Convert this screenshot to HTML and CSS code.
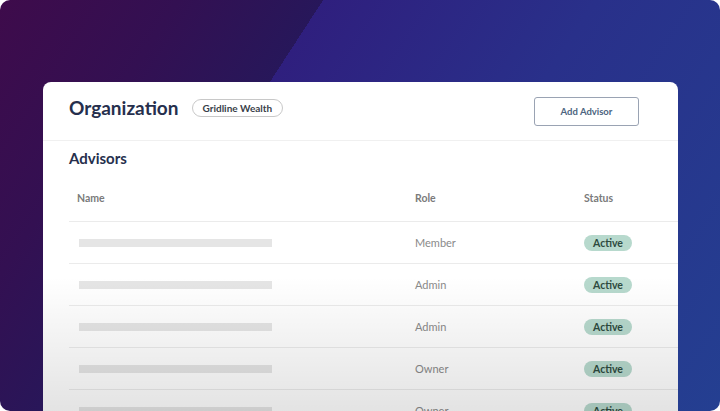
FILE: index.html
```html
<!DOCTYPE html>
<html lang="en">
<head>
  <meta charset="UTF-8">
  <title>Organization</title>
  <link rel="stylesheet" href="styles.css">
</head>
<body>
<div class="frame">
  <div class="card">
    <div class="card-header">
      <div class="title-group">
        <h1>Organization</h1>
        <span class="org-pill">Gridline Wealth</span>
      </div>
      <button class="add-button">Add Advisor</button>
    </div>

    <div class="card-body">
      <h2>Advisors</h2>
      <div class="advisors">
        <div class="row head">
          <div class="cell name">Name</div>
          <div class="cell">Role</div>
          <div class="cell">Status</div>
        </div>
        <div class="row">
          <div class="cell name"><div class="skeleton"></div></div>
          <div class="cell">Member</div>
          <div class="cell"><span class="status">Active</span></div>
        </div>
        <div class="row">
          <div class="cell name"><div class="skeleton"></div></div>
          <div class="cell">Admin</div>
          <div class="cell"><span class="status">Active</span></div>
        </div>
        <div class="row">
          <div class="cell name"><div class="skeleton"></div></div>
          <div class="cell">Admin</div>
          <div class="cell"><span class="status">Active</span></div>
        </div>
        <div class="row">
          <div class="cell name"><div class="skeleton"></div></div>
          <div class="cell">Owner</div>
          <div class="cell"><span class="status">Active</span></div>
        </div>
        <div class="row">
          <div class="cell name"><div class="skeleton"></div></div>
          <div class="cell">Owner</div>
          <div class="cell"><span class="status">Active</span></div>
        </div>
      </div>
    </div>
  </div>
</div>
</body>
</html>
```

FILE: styles.css
```css
body {
  margin: 0;
  background: #fff;
  font-family: Lato, "Open Sans", sans-serif;
}
.frame {
  width: 720px;
  height: 411px;
  border-radius: 10px;
  overflow: hidden;
  padding: 82px 42px 0 43px;
  box-sizing: border-box;
  background: linear-gradient(123deg, #3e0b4b 0, #331052 150px, #27175a 271px, #2f1f7e 271px, #29308a 500px, #243f91 100%);
}
.card {
  position: relative;
  height: 340px;
  border-radius: 8px 8px 0 0;
  background: #fff;
}
/* fade to grey over the lower rows */
.card::after {
  content: "";
  position: absolute;
  inset: 0;
  pointer-events: none;
  background: linear-gradient(to bottom, rgba(0, 0, 0, 0) 195px, rgba(0, 0, 0, 0.11) 330px);
}
.card-header {
  display: flex;
  align-items: center;
  justify-content: space-between;
  height: 58px;
  padding: 0 39px 0 26px;
  border-bottom: 1px solid #f0f0f0;
}
.title-group {
  display: flex;
  align-items: center;
  gap: 13px;
  margin-bottom: 7px;
}
h1 {
  margin: 0;
  font-size: 19px;
  font-weight: 700;
  color: #262f4d;
}
.org-pill {
  padding: 2px 10px;
  border: 1px solid #c8c8c8;
  border-radius: 10px;
  font-size: 10px;
  font-weight: 700;
  color: #3a3f4a;
}
.add-button {
  width: 105px;
  height: 29px;
  margin-top: 1px;
  background: #fff;
  border: 1px solid #9aa3b3;
  border-radius: 3px;
  font-family: inherit;
  font-size: 9.5px;
  font-weight: 700;
  color: #4d6480;
}
.card-body {
  padding: 8px 0 0 26px;
}
h2 {
  margin: 0;
  font-size: 15px;
  font-weight: 700;
  color: #262f4d;
}
.advisors {
  margin-top: 12px;
}
.row {
  display: grid;
  grid-template-columns: 346px 169px 1fr;
  align-items: center;
  height: 42px;
  border-bottom: 1px solid #ebebeb;
  box-sizing: border-box;
  font-size: 11px;
  color: #8a8a8a;
}
.row.head {
  height: 43px;
  padding-bottom: 5px;
  font-size: 10.5px;
  font-weight: 700;
  color: #7b7b7b;
}
.cell.name {
  padding-left: 8px;
}
.skeleton {
  width: 193px;
  height: 8px;
  margin-left: 2px;
  background: #e5e5e5;
}
.status {
  display: inline-block;
  padding: 2px 9px;
  border-radius: 8px;
  background: #b7d9cd;
  font-size: 10.5px;
  font-weight: 700;
  color: #2e4b40;
}
```
